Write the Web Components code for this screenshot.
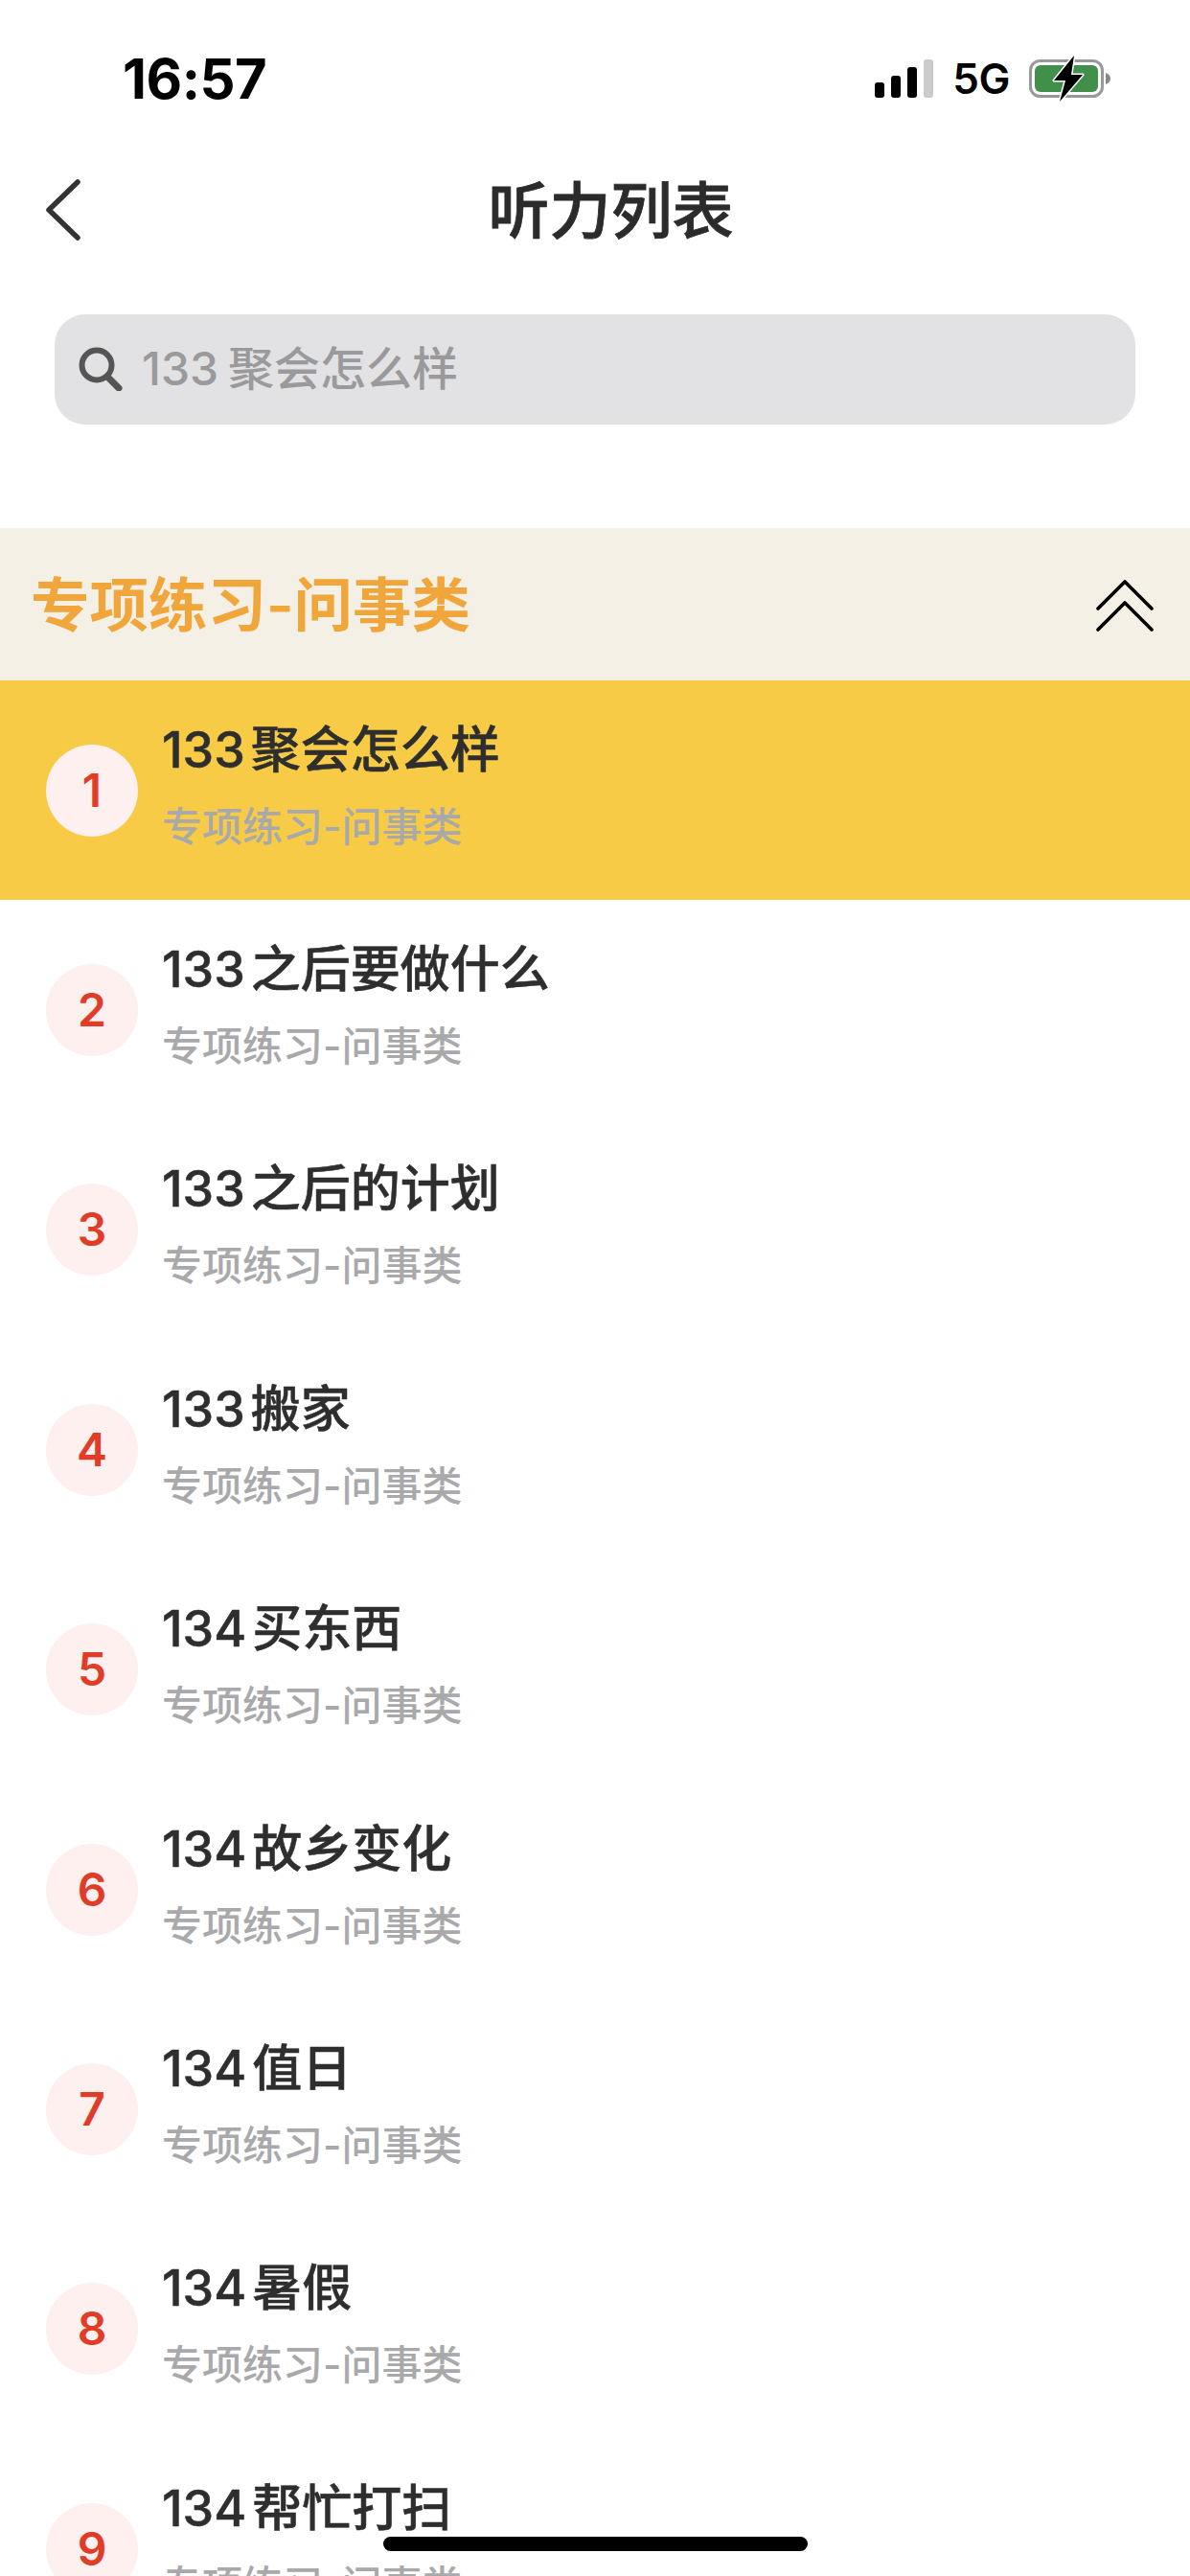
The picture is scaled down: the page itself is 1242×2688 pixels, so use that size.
<!DOCTYPE html>
<html lang="zh-CN">
<head>
<meta charset="utf-8">
<title>听力列表</title>
<style>
    html, body {
        margin: 0;
        height: 2688px;
        overflow: hidden;
        background: #fff;
        font-family: Inter, "Noto Sans CJK SC", sans-serif;
    }
</style>
</head>
<body>
<status-bar time="16:57"></status-bar>
<nav-bar>听力列表</nav-bar>
<search-box>133 聚会怎么样</search-box>
<section-header>专项练习-问事类</section-header>
<list-row num="1" active><span slot="title">133 聚会怎么样</span>专项练习-问事类</list-row>
<list-row num="2"><span slot="title">133 之后要做什么</span>专项练习-问事类</list-row>
<list-row num="3"><span slot="title">133 之后的计划</span>专项练习-问事类</list-row>
<list-row num="4"><span slot="title">133 搬家</span>专项练习-问事类</list-row>
<list-row num="5"><span slot="title">134 买东西</span>专项练习-问事类</list-row>
<list-row num="6"><span slot="title">134 故乡变化</span>专项练习-问事类</list-row>
<list-row num="7"><span slot="title">134 值日</span>专项练习-问事类</list-row>
<list-row num="8"><span slot="title">134 暑假</span>专项练习-问事类</list-row>
<list-row num="9"><span slot="title">134 帮忙打扫</span>专项练习-问事类</list-row>
<home-indicator></home-indicator>

<script>
class StatusBar extends HTMLElement {
    constructor() {
        super();
        this.attachShadow({ mode: 'open' });
        this.shadowRoot.innerHTML = `
            <style>
                :host {
                    display: flex;
                    align-items: center;
                    justify-content: space-between;
                    box-sizing: border-box;
                    height: 150px;
                    padding: 14px 82px 0 128px;
                    color: #000;
                }
                .time { font: 700 58px/1 Inter, "Liberation Sans", sans-serif; letter-spacing: -0.5px; }
                .right { display: flex; align-items: center; gap: 20px; }
                .net { font: 600 44px/1 Inter, "Liberation Sans", sans-serif; letter-spacing: -0.5px; }
                svg { display: block; }
            </style>
            <span class="time"></span>
            <div class="right">
                <svg width="61" height="40" viewBox="0 0 61 40">
                    <rect x="0" y="24" width="10" height="16" rx="3" fill="#000"/>
                    <rect x="17" y="17" width="10" height="23" rx="3" fill="#000"/>
                    <rect x="34" y="8" width="10" height="32" rx="3" fill="#000"/>
                    <rect x="51" y="0" width="10" height="40" rx="3" fill="#ccc"/>
                </svg>
                <span class="net">5G</span>
                <svg width="86" height="48" viewBox="0 0 86 48">
                    <rect x="1.5" y="5.5" width="75" height="37" rx="10" fill="none" stroke="#999" stroke-width="3"/>
                    <rect x="6" y="10" width="66" height="28" rx="6" fill="#418f4b"/>
                    <path d="M80 18c3 1 5 3 5 6s-2 5-5 6z" fill="#888"/>
                    <path d="M47 0 L26 26 H38 L32 48 L56 20 H44 Z" fill="#000" stroke="#fff" stroke-width="3" stroke-linejoin="round" paint-order="stroke"/>
                </svg>
            </div>
        `;
    }

    connectedCallback() {
        this.shadowRoot.querySelector('.time').textContent = this.getAttribute('time');
    }
}

class NavBar extends HTMLElement {
    constructor() {
        super();
        this.attachShadow({ mode: 'open' });
        this.shadowRoot.innerHTML = `
            <style>
                :host {
                    display: grid;
                    grid-template-columns: 1fr auto 1fr;
                    align-items: center;
                    box-sizing: border-box;
                    height: 138px;
                    padding-left: 47px;
                    padding-right: 14px;
                    color: #2b2b2b;
                }
                .title { font: 500 64px/1 "Noto Sans CJK SC", sans-serif; -webkit-text-stroke: 0.8px #2b2b2b; padding-bottom: 9px; }
                svg { display: block; }
            </style>
            <svg width="38" height="64" viewBox="0 0 38 64">
                <path d="M34 3 L4 32 L34 61" fill="none" stroke="#333" stroke-width="5.5" stroke-linecap="round" stroke-linejoin="round"/>
            </svg>
            <span class="title"><slot></slot></span>
        `;
    }
}

class SearchBox extends HTMLElement {
    constructor() {
        super();
        this.attachShadow({ mode: 'open' });
        this.shadowRoot.innerHTML = `
            <style>
                :host {
                    display: flex;
                    align-items: center;
                    gap: 20px;
                    box-sizing: border-box;
                    height: 115px;
                    margin: 40px 57px 108px;
                    padding: 0 0 2px 25px;
                    border-radius: 32px;
                    background: #e2e2e4;
                    color: #9a9a9c;
                    font: 500 48px/1 Inter, "Noto Sans CJK SC", sans-serif;
                    word-spacing: -3px;
                }
                svg { display: block; flex: none; }
            </style>
            <svg width="46" height="46" viewBox="0 0 46 46">
                <circle cx="19" cy="19" r="15.5" fill="none" stroke="#555" stroke-width="6"/>
                <path d="M30 31 L42 43" fill="none" stroke="#555" stroke-width="7" stroke-linecap="round"/>
            </svg>
            <span><slot></slot></span>
        `;
    }
}

class SectionHeader extends HTMLElement {
    constructor() {
        super();
        this.attachShadow({ mode: 'open' });
        this.shadowRoot.innerHTML = `
            <style>
                :host {
                    display: flex;
                    align-items: center;
                    justify-content: space-between;
                    box-sizing: border-box;
                    height: 159px;
                    padding: 2px 38px 0 32px;
                    background: #f5f0e6;
                    color: #f0a63a;
                    font: 600 61.5px/1 Inter, "Noto Sans CJK SC", sans-serif;
                }
                svg { display: block; }
            </style>
            <span><slot></slot></span>
            <svg width="60" height="54" viewBox="0 0 60 54">
                <path d="M2 30 L30 2 L58 30 M2 52 L30 24 L58 52" fill="none" stroke="#000" stroke-width="3.6" stroke-linecap="round" stroke-linejoin="round"/>
            </svg>
        `;
    }
}

class ListRow extends HTMLElement {
    constructor() {
        super();
        this.attachShadow({ mode: 'open' });
        this.shadowRoot.innerHTML = `
            <style>
                :host {
                    display: flex;
                    align-items: center;
                    gap: 25px;
                    box-sizing: border-box;
                    height: 229.4px;
                    padding-left: 48px;
                    background: #fff;
                }
                :host([active]) { background: #f7cb45; }
                .num {
                    flex: none;
                    display: flex;
                    align-items: center;
                    justify-content: center;
                    width: 96px;
                    height: 96px;
                    border-radius: 50%;
                    background: #fdf0ee;
                    color: #e03c28;
                    font: 600 48px/1 Inter, sans-serif;
                }
                .text { display: flex; flex-direction: column; gap: 15px; padding-bottom: 9px; }
                .title { color: #2e2e2e; font: 500 52px/70px Inter, "Noto Sans CJK SC", sans-serif; -webkit-text-stroke: 0.5px #2e2e2e; word-spacing: -8px; }
                .sub { color: #a9a9ab; font: 500 42px/60px Inter, "Noto Sans CJK SC", sans-serif; }
            </style>
            <span class="num"></span>
            <div class="text">
                <span class="title"><slot name="title"></slot></span>
                <span class="sub"><slot></slot></span>
            </div>
        `;
    }

    connectedCallback() {
        this.shadowRoot.querySelector('.num').textContent = this.getAttribute('num');
    }
}

class HomeIndicator extends HTMLElement {
    constructor() {
        super();
        this.attachShadow({ mode: 'open' });
        this.shadowRoot.innerHTML = `
            <style>
                :host {
                    display: block;
                    position: absolute;
                    left: 400px;
                    top: 2647px;
                    width: 443px;
                    height: 15px;
                    border-radius: 8px;
                    background: #000;
                }
            </style>
        `;
    }
}

customElements.define('status-bar', StatusBar);
customElements.define('nav-bar', NavBar);
customElements.define('search-box', SearchBox);
customElements.define('section-header', SectionHeader);
customElements.define('list-row', ListRow);
customElements.define('home-indicator', HomeIndicator);
</script>
</body>
</html>
